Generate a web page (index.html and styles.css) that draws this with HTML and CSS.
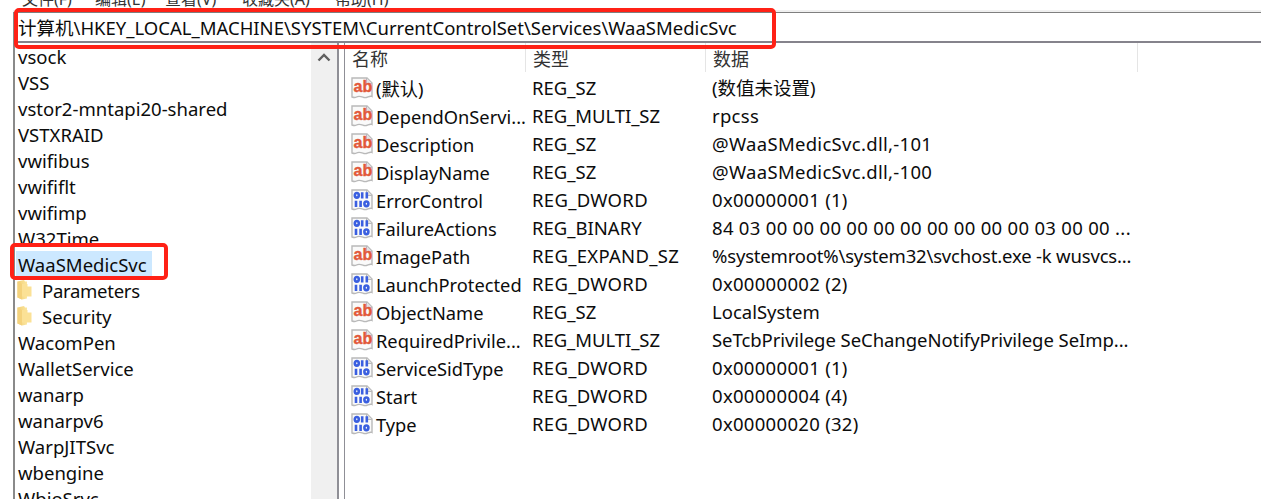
FILE: index.html
```html
<!DOCTYPE html>
<html lang="zh">
<head>
<meta charset="utf-8">
<title>注册表编辑器</title>
<link rel="stylesheet" href="styles.css">
</head>
<body>
<svg class="defs" width="0" height="0" aria-hidden="true">
  <defs>
    <linearGradient id="fold" x1="0" y1="0" x2="1" y2="0">
      <stop offset="0" stop-color="#f2cf74"/><stop offset="1" stop-color="#fbe6a0"/>
    </linearGradient>
    <symbol id="page" viewBox="0 0 22 22">
      <path d="M1 1H16L21 6V19.500C18.500 18 16 21.500 13 20.500C10 19.500 8 18.500 5.500 20C4 21 2.500 20.500 1 20Z" fill="#fafafa" stroke="#b9b9b9" stroke-width="1.400"/>
      <path d="M15.500 1V6.500H21" fill="#e2e2e2" stroke="#b9b9b9"/>
    </symbol>
    <symbol id="bin" viewBox="0 0 22 22">
      <use href="#page" width="22" height="22"/>
      <g fill="none" stroke="#3a5fe0" stroke-width="2.600">
        <ellipse cx="5.800" cy="6.300" rx="2" ry="2.300"/>
        <path d="M11.200 3.200V9.500M15.800 3.200V9.500"/>
        <path d="M5 11.800V18M9.600 11.800V18"/>
        <ellipse cx="15.400" cy="14.800" rx="2" ry="2.300"/>
      </g>
    </symbol>
    <symbol id="folder" viewBox="0 0 15 20">
      <path d="M0.500 1.500L7 0L8 1.500H10V18.500L5 19.500L0.500 17.500Z" fill="url(#fold)"/>
      <path d="M5 4H10.500V6.500H14.500V16.500H5Z" fill="#fbe196"/>
      <path d="M0.500 1.500L5 4V19.500L0.500 17.500Z" fill="#f4d27c"/>
    </symbol>
  </defs>
</svg>

<div class="window">
  <div class="menubar">
    <span class="m1">文件(F)</span><span class="m2">编辑(E)</span><span class="m3">查看(V)</span><span class="m4">收藏夹(A)</span><span class="m5">帮助(H)</span>
  </div>
  <div class="address">计算机\HKEY_LOCAL_MACHINE\SYSTEM\CurrentControlSet\Services\WaaSMedicSvc</div>
  <div class="panes">
    <div class="tree">
      <div class="node">vsock</div>
      <div class="node">VSS</div>
      <div class="node">vstor2-mntapi20-shared</div>
      <div class="node">VSTXRAID</div>
      <div class="node">vwifibus</div>
      <div class="node">vwififlt</div>
      <div class="node">vwifimp</div>
      <div class="node">W32Time</div>
      <div class="node"><span class="selected">WaaSMedicSvc</span></div>
      <div class="node child tight"><svg class="ficon"><use href="#folder"/></svg>Parameters</div>
      <div class="node child"><svg class="ficon"><use href="#folder"/></svg>Security</div>
      <div class="node">WacomPen</div>
      <div class="node">WalletService</div>
      <div class="node">wanarp</div>
      <div class="node">wanarpv6</div>
      <div class="node">WarpJITSvc</div>
      <div class="node">wbengine</div>
      <div class="node">WbioSrvc</div>
    </div>
    <div class="scrollbar">
      <svg class="chev" width="14" height="9" viewBox="0 0 14 9"><path d="M1.500 7.500L7 2L12.500 7.500" fill="none" stroke="#5f5f5f" stroke-width="2.400"/></svg>
    </div>
    <div class="split"></div>
    <div class="list">
      <div class="head">
        <div class="hcell">名称</div><div class="hcell">类型</div><div class="hcell">数据</div>
      </div>
      <div class="row"><div class="name"><svg class="icon" viewBox="0 0 22 22"><use href="#page" width="22" height="22"/><text class="ab" x="2.500" y="14.500">ab</text></svg>(默认)</div><div>REG_SZ</div><div>(数值未设置)</div></div>
      <div class="row"><div class="name"><svg class="icon" viewBox="0 0 22 22"><use href="#page" width="22" height="22"/><text class="ab" x="2.500" y="14.500">ab</text></svg>DependOnServi...</div><div class="t-multi">REG_MULTI_SZ</div><div class="d-hex">rpcss</div></div>
      <div class="row"><div class="name"><svg class="icon" viewBox="0 0 22 22"><use href="#page" width="22" height="22"/><text class="ab" x="2.500" y="14.500">ab</text></svg>Description</div><div>REG_SZ</div><div class="d-hex">@WaaSMedicSvc.dll,-101</div></div>
      <div class="row"><div class="name"><svg class="icon" viewBox="0 0 22 22"><use href="#page" width="22" height="22"/><text class="ab" x="2.500" y="14.500">ab</text></svg>DisplayName</div><div>REG_SZ</div><div class="d-hex">@WaaSMedicSvc.dll,-100</div></div>
      <div class="row"><div class="name"><svg class="icon"><use href="#bin"/></svg>ErrorControl</div><div class="t-wide">REG_DWORD</div><div class="d-hex">0x00000001 (1)</div></div>
      <div class="row"><div class="name"><svg class="icon"><use href="#bin"/></svg>FailureActions</div><div>REG_BINARY</div><div class="d-hex">84 03 00 00 00 00 00 00 00 00 00 00 03 00 00 ...</div></div>
      <div class="row"><div class="name"><svg class="icon" viewBox="0 0 22 22"><use href="#page" width="22" height="22"/><text class="ab" x="2.500" y="14.500">ab</text></svg>ImagePath</div><div class="t-wide">REG_EXPAND_SZ</div><div class="d-path">%systemroot%\system32\svchost.exe -k wusvcs...</div></div>
      <div class="row"><div class="name"><svg class="icon"><use href="#bin"/></svg>LaunchProtected</div><div class="t-wide">REG_DWORD</div><div class="d-hex">0x00000002 (2)</div></div>
      <div class="row"><div class="name"><svg class="icon" viewBox="0 0 22 22"><use href="#page" width="22" height="22"/><text class="ab" x="2.500" y="14.500">ab</text></svg>ObjectName</div><div>REG_SZ</div><div>LocalSystem</div></div>
      <div class="row"><div class="name"><svg class="icon" viewBox="0 0 22 22"><use href="#page" width="22" height="22"/><text class="ab" x="2.500" y="14.500">ab</text></svg>RequiredPrivile...</div><div class="t-multi">REG_MULTI_SZ</div><div class="d-priv">SeTcbPrivilege SeChangeNotifyPrivilege SeImp...</div></div>
      <div class="row"><div class="name"><svg class="icon"><use href="#bin"/></svg>ServiceSidType</div><div class="t-wide">REG_DWORD</div><div class="d-hex">0x00000001 (1)</div></div>
      <div class="row"><div class="name"><svg class="icon"><use href="#bin"/></svg>Start</div><div class="t-wide">REG_DWORD</div><div class="d-hex">0x00000004 (4)</div></div>
      <div class="row"><div class="name"><svg class="icon"><use href="#bin"/></svg>Type</div><div class="t-wide">REG_DWORD</div><div class="d-hex">0x00000020 (32)</div></div>
    </div>
  </div>
</div>

<div class="mark mark-address"></div>
<div class="mark mark-node"></div>
</body>
</html>
```
FILE: styles.css
```css
* { box-sizing: border-box; }
html, body { margin: 0; padding: 0; height: 499px; overflow: hidden; background: #fff; }
body {
  position: relative;
  color: #0c0c0c;
  font-family: "Noto Sans", "Noto Sans CJK SC", sans-serif;
  font-size: 18.500px;
  white-space: nowrap;
}
.defs { position: absolute; }
.window {
  margin-left: 13px;
  height: 499px;
  display: flex;
  flex-direction: column;
  border-left: 2px solid #8a8a8a;
}
.menubar {
  height: 12px;
  display: flex;
  align-items: flex-end;
  background: linear-gradient(#fff 10px, #f0f0f0 10px);
  overflow: hidden;
  font-size: 16px;
  line-height: 18px;
  color: #333;
  margin-left: -2px;
  padding-left: 9px;
}
.menubar span { display: block; margin-bottom: 4px; }
.m1 { width: 73px; }
.m2 { width: 70px; }
.m3 { width: 77px; }
.m4 { width: 93px; }
.address {
  height: 31px;
  border-top: 1px solid #7f7f7f;
  border-bottom: 2px solid #85838c;
  line-height: 30px;
  padding-left: 3px;
  background: #fff;
}
.panes { flex: 1; min-height: 0; display: flex; }
.tree { width: 296px; overflow: hidden; padding-left: 3px; font-size: 18.550px; }
.node { height: 26px; line-height: 26px; padding-top: 2px; display: flex; align-items: center; }
.selected {
  background: #cce8ff;
  margin: -2px 0 0 -2px;
  padding: 0 2px;
  width: 136px;
  height: 26px;
  line-height: 28px;
}
.child { padding-left: 24px; position: relative; }
.tight { letter-spacing: -0.300px; }
.ficon { position: absolute; left: -1px; top: 3px; width: 15px; height: 20px; }
.scrollbar {
  width: 26px;
  background: #f0f0f0;
  padding: 10px 0 0 6px;
}
.chev { display: block; }
.split {
  width: 8px;
  border-left: 2px solid #8f8f96;
  border-right: 1px solid #8f8f96;
  background: #fff;
}
.list { flex: 1; min-width: 0; }
.head {
  height: 30px;
  display: grid;
  grid-template-columns: 181px 180px 432px;
}
.hcell {
  padding-left: 7px;
  border-right: 1px solid #e5e5e5;
  line-height: 33px;
  color: #333;
  font-size: 18px;
  height: 29px;
}
.row {
  height: 28px;
  line-height: 30px;
  display: grid;
  grid-template-columns: 187px 180px 1fr;
}
.name { display: flex; align-items: center; padding: 1px 0 0 6px; font-size: 18.300px; line-height: 26px; }
.icon { width: 22px; height: 22px; margin: -1px 3px 0 0; flex: none; }
.t-wide { letter-spacing: 0.300px; }
.t-multi { letter-spacing: -0.050px; }
.d-hex { letter-spacing: 0.300px; }
.d-path { letter-spacing: -0.180px; }
.d-priv { letter-spacing: -0.060px; }
.ab {
  font-family: "Liberation Sans", sans-serif;
  font-weight: 700;
  font-size: 16px;
  fill: #e2583a;
  stroke: #e2583a;
  stroke-width: 0.400px;
}
.mark {
  position: absolute;
  border: 4px solid #ff2116;
  border-radius: 5px;
  pointer-events: none;
}
.mark-address { left: 14px; top: 8px; width: 762px; height: 41px; }
.mark-node { left: 10px; top: 243px; width: 158px; height: 37px; }
```
